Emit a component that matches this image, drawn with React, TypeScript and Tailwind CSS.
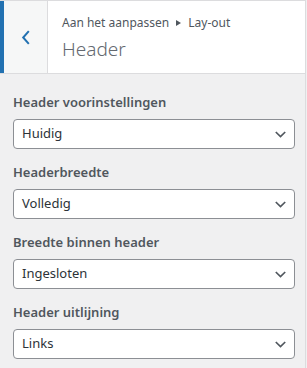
import React from "react";

const fields = [
  { label: "Header voorinstellingen", value: "Huidig" },
  { label: "Headerbreedte", value: "Volledig" },
  { label: "Breedte binnen header", value: "Ingesloten" },
  { label: "Header uitlijning", value: "Links" },
];

function Chevron() {
  return (
    <svg width="11" height="7" viewBox="0 0 11 7" fill="none">
      <path d="M0.8 1 L5.5 5.6 L10.2 1" stroke="#50575e" strokeWidth="1.7" />
    </svg>
  );
}

export default function App() {
  return (
    <div
      className="w-[307px] h-[368px] bg-[#f0f0f1] overflow-hidden"
      style={{ fontFamily: '"Noto Sans", "Open Sans", sans-serif' }}
    >
      <div className="w-[306px] border-r border-[#dcdcde] h-full">
        <div className="flex h-[74px] border-t border-b border-[#dcdcde] bg-white">
          <div className="w-[48px] shrink-0 border-l-4 border-l-[#2271b1] border-r border-r-[#dcdcde] bg-[#f6f7f7] flex items-center justify-center">
            <svg width="10" height="15" viewBox="0 0 10 15" fill="none">
              <path d="M7.8 1.2 L2.2 7.5 L7.8 13.8" stroke="#2271b1" strokeWidth="2" />
            </svg>
          </div>
          <div className="pl-[14px] pt-[12px]">
            <div className="text-[12px] leading-[20px] text-[#50575e] flex items-center">
              <span>Aan het aanpassen</span>
              <svg width="5" height="6" viewBox="0 0 5 6" className="mx-[7px]">
                <path d="M0 0 L5 3 L0 6 Z" fill="#50575e" />
              </svg>
              <span>Lay-out</span>
            </div>
            <div className="text-[19px] leading-[26px] font-light text-[#646970] mt-[3px]">Header</div>
          </div>
        </div>
        <div className="px-[13px] pt-[18px] flex flex-col gap-[13px]">
          {fields.map((f) => (
            <div key={f.label} className="flex flex-col">
              <div className="text-[13px] leading-[20px] font-semibold text-[#50575e]">{f.label}</div>
              <div className="mt-[7px] h-[30px] w-[282px] bg-white border border-[#8c8f94] rounded-[4px] flex items-center justify-between pl-[8px] pr-[8px]">
                <span className="text-[13px] text-[#2c3338]">{f.value}</span>
                <Chevron />
              </div>
            </div>
          ))}
        </div>
      </div>
    </div>
  );
}
